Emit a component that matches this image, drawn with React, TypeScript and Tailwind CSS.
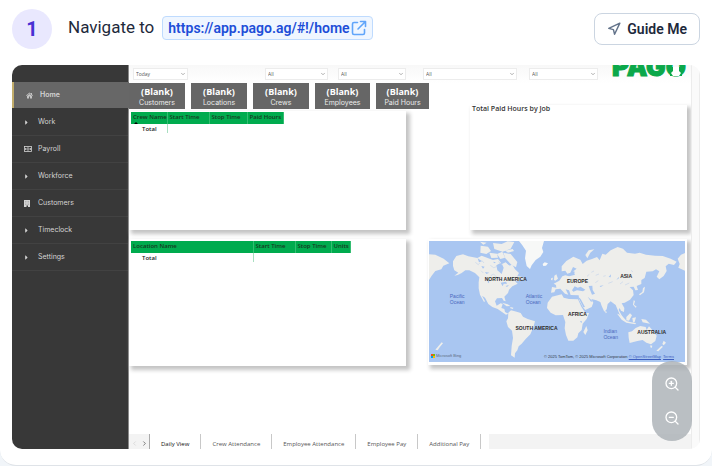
import { useState } from 'react';
import clsx from 'clsx';
import { ChevronDown, ChevronLeft, ChevronRight, Navigation, ZoomIn, ZoomOut } from 'lucide-react';
import { FaCaretRight } from 'react-icons/fa';

const navItems = [
  { label: 'Work', icon: 'caret' },
  { label: 'Payroll', icon: 'money' },
  { label: 'Workforce', icon: 'caret' },
  { label: 'Customers', icon: 'building' },
  { label: 'Timeclock', icon: 'caret' },
  { label: 'Settings', icon: 'caret' },
];

const filters = [
  { name: 'Period', value: 'Today', className: 'ml-1 w-[55px]' },
  { name: 'Location', value: 'All', className: 'ml-[77px] w-[63px]' },
  { name: 'Crew', value: 'All', className: 'ml-[10px] w-[68px]' },
  { name: 'Employee', value: 'All', className: 'ml-[17px] w-[94px]' },
  { name: 'Job', value: 'All', className: 'ml-3 w-[69px]' },
];

const cards = ['Customers', 'Locations', 'Crews', 'Employees', 'Paid Hours'];

const tabs = ['Daily View', 'Crew Attendance', 'Employee Attendance', 'Employee Pay', 'Additional Pay'];

const continents = [
  { name: 'NORTH AMERICA', className: 'left-[30%] top-[31%]' },
  { name: 'SOUTH AMERICA', className: 'left-[42%] top-[72%]' },
  { name: 'EUROPE', className: 'left-[58%] top-[33%]' },
  { name: 'ASIA', className: 'left-[77%] top-[29%]' },
  { name: 'AFRICA', className: 'left-[58%] top-[60%]' },
  { name: 'AUSTRALIA', className: 'left-[87%] top-[75%]' },
];

const oceans = [
  { name: 'Pacific', className: 'left-[11%] top-[48%]' },
  { name: 'Atlantic', className: 'left-[41%] top-[48%]' },
  { name: 'Indian', className: 'left-[71%] top-[77%]' },
];

function NavIcon({ icon }: { icon: string }) {
  if (icon === 'money') {
    return (
      <svg viewBox="0 0 16 12" className="h-[6px] w-2" fill="none" stroke="currentColor" strokeWidth="1.6">
        <rect x="1" y="1" width="14" height="10" />
        <circle cx="8" cy="6" r="2.4" />
        <path d="M3 4v4M13 4v4" />
      </svg>
    );
  }
  if (icon === 'building') {
    return (
      <svg viewBox="0 0 12 14" className="h-[7px] w-[6px]" fill="currentColor">
        <path d="M0 0h12v14H8v-3H5v3H0z" />
        <path d="M2 3h8M2 6h8M2 9h8" stroke="#8b8b8b" strokeWidth="1" strokeDasharray="2 1" />
      </svg>
    );
  }
  return <FaCaretRight className="-ml-px size-[7px]" />;
}

function Sidebar() {
  return (
    <nav className="w-[117px] shrink-0 border-r border-[#8a8a8a] bg-[#383838] pt-[17px] font-['Inter',sans-serif] text-[7px] leading-[10px] text-[#d4d4d4]">
      <a
        href="#home"
        className="-mr-px mb-px flex h-[26px] items-center border-l-2 border-[#c2ad6b] bg-[#676767] pl-3 font-semibold"
      >
        <svg viewBox="0 0 14 14" className="mr-[7px] size-[7px]" fill="#c4c4c4">
          <path d="M7 1L0 7l1 1 6-5 6 5 1-1-2-2V2h-2v1.500z" />
          <path d="M7 4L2 8v5h4V9h2v4h4V8z" />
        </svg>
        Home
      </a>
      {navItems.map((item) => (
        <a key={item.label} href={'#' + item.label} className="flex h-[27px] items-center border-b border-[#424242] pl-3">
          <span className="flex w-[14px] items-center">
            <NavIcon icon={item.icon} />
          </span>
          {item.label}
        </a>
      ))}
    </nav>
  );
}

function Filters() {
  return (
    <div className="flex h-[18px] items-start bg-gradient-to-b from-[#f8f8f8] to-white pt-[3px]">
      {filters.map((f) => (
        <div key={f.name} className={clsx('relative shrink-0', f.className)}>
          <select
            aria-label={f.name}
            className="block h-3 w-full appearance-none border border-[#ececec] bg-white px-[2px] text-[5px] leading-[10px] text-[#555]"
          >
            <option>{f.value}</option>
          </select>
          <ChevronDown className="pointer-events-none absolute right-[2px] top-[3px] size-[6px] text-[#666]" />
        </div>
      ))}
      {/* logo runs up under the top edge of the report */}
      <div className="relative -mt-[14px] ml-[14px]">
        <span className="block font-['Inter',sans-serif] text-[26px] font-black leading-[26px] text-[#0ba84a] [-webkit-text-stroke:1px_#0ba84a]">
          PAGO
        </span>
        <svg viewBox="0 0 12 9" className="absolute bottom-[4px] right-[4px] h-[9px] w-3">
          <path fill="#0ba84a" d="M0 0h12v9H0z" />
          <path fill="#fff" d="M3 0h6v4l2 2-2 3H3L1 6l2-2z" />
        </svg>
      </div>
    </div>
  );
}

function ReportTable({ columns, className }: { columns: { name: string; width: string }[]; className?: string }) {
  return (
    <table className={clsx('table-fixed border-collapse text-left text-[6px] leading-[8px]', className)}>
      <thead>
        <tr className="h-3 bg-[#00ab4e] text-[#17381f]">
          {columns.map((c) => (
            <th
              key={c.name}
              className={clsx('relative whitespace-nowrap border-r border-[#35bd72] p-0 pb-[2px] pl-[2px] font-semibold', c.width)}
            >
              {c.name}
              {c.name === 'Crew Name' && (
                <svg viewBox="0 0 4 2" className="absolute bottom-0 left-[3px] h-[2px] w-1">
                  <path d="M0 2l2-2 2 2z" />
                </svg>
              )}
            </th>
          ))}
        </tr>
      </thead>
      <tbody>
        <tr className="h-[9px] text-[#222]">
          <td className="border-r border-[#a9dfc1] p-0 pl-[11px] font-semibold">Total</td>
          <td colSpan={columns.length - 1} className="p-0"></td>
        </tr>
      </tbody>
    </table>
  );
}

function WorldMap() {
  return (
    <div className="relative h-[121px] overflow-hidden bg-[#a9c6f1] font-['Liberation_Sans',sans-serif] text-[5px] leading-[6px]">
      <svg viewBox="0 3 768 363" preserveAspectRatio="none" className="block h-full w-full" fill="#eeeeeb">
        {/* North America */}
        <path d="M72 64L82 48L102 43L118 49L145 54L158 47L176 54L192 60L207 57L216 68L202 76L205 91L218 102L224 83L219 72L230 67L240 77L250 74L258 88L270 99L264 110L279 113L270 123L258 124L266 131L250 139L240 149L237 159L226 170L230 184L224 182L219 174L204 175L198 184L203 197L215 190L221 192L217 204L226 207L228 216L238 221L231 224L219 216L206 207L190 201L178 192L168 173L159 167L168 184L165 186L153 164L149 145L149 127L151 112L138 99L121 91L109 91L98 99L86 105L76 107L88 98L76 91L72 78Z" />
        {/* Arctic islands */}
        <path d="M155 17l22 3 9 13-14 9-18-4zM181 38l23 3 3 12-20 1zM204 42l16-7 8 18-14 4zM223 38l22 4 20 24-4 16-14-8-18-19zM192 9l26 3 18-8 20 2-11 20-24 9-25-8zM153 5l20 3-10 6zM229 32l22-5 4 6-18 5zM231 70l12 8-10 6zM264 108l18 3 1 8-14-2zM219 188l17 5 8 5-11 1zM244 201l9 2-1 4-8-2z" />
        {/* Greenland and Iceland */}
        <path fill="#f7f8f7" d="M270 3H345L339 24L343 36L334 50L320 60L308 76L303 87L293 78L288 55L291 32L280 16ZM341 72l6-5 10 3-6 7-8 1z" />
        {/* South America */}
        <path d="M238 218L246 211L263 215L275 219L282 230L296 237L318 244L313 262L304 283L290 297L278 311L269 319L265 331L258 340L257 353L246 346L248 318L252 294L249 272L237 261L232 244L237 235Z" />
        {/* Africa */}
        <path d="M369 170L398 163L404 173L420 177L447 178L457 200L469 219L480 219L473 237L461 251L458 270L448 280L445 292L433 302L418 302L411 285L407 265L409 246L402 225L380 226L365 218L354 204L356 188ZM472 258l4 13-7 14-6-9z" />
        {/* Europe and Asia */}
        <path d="M366 158L369 141L382 143L381 135L374 131L391 122L400 109L409 106L420 109L438 104L433 94L443 86L432 81L424 98L415 101L409 92L398 94L398 79L412 63L433 50L454 59L461 72L473 62L489 57L504 51L512 61L520 41L530 44L545 31L566 21L582 26L594 38L618 41L632 38L651 44L678 47L701 48L725 56L743 65L735 75L719 71L710 79L713 93L704 108L691 118L683 110L691 94L681 88L671 94L652 95L647 114L637 120L637 132L623 138L627 150L619 151L614 140L602 141L612 151L614 165L603 179L587 188L578 190L586 204L585 216L576 212L572 204L569 210L581 231L573 226L565 207L560 195L545 184L536 192L533 208L526 215L518 198L514 186L502 181L487 177L493 188L488 201L469 210L462 202L450 180L449 166L425 165L420 151L410 148L418 164L408 161L394 146L380 148L376 157Z" />
        <path d="M0 43L19 44L44 56L61 70L43 77L37 88L19 93L8 107L0 120ZM768 39L756 44L746 56L752 72L748 83L768 92ZM376 107l6-4 5 13-8 6-4-2zM367 114l5-1-2 8-4-1zM469 45l10-14 17-3-12 10-9 17z" />
        {/* Islands, Australia and New Zealand */}
        <path d="M642 144l6-4-3 17-12 9-3-3 10-7zM614 181l4 2-3 11 8 6-3 3-8-9zM566 221l14 8 13 14 13 4 15 2-2 4-27-5-14-9-13-17zM592 231l11-11 6 6-9 16-8-1zM610 234l11-2-4 14-5 1zM637 237l14 2 12 12-22-4zM598 277L609 274L620 264L634 258L650 261L653 270L660 259L673 274L683 287L679 303L666 313L652 308L641 300L625 303L602 309L599 293ZM664 316l6 1-2 7-4-2zM704 302l7 6-7 8-4-4zM697 318l5 2-14 14-6-2zM38 307l4 3-10 12-6 9-7-2zM528 211l6 6-4 3z" />
        {/* inland water */}
        <g fill="#a9c6f1">
          <path d="M429 151l8-12 9 4 9-3 14 9-7 5-18-3-11 4zM479 138l11-1 1 13 7 11-9 3-6-15zM446 169l9 8 13 24-5 1zM476 170l15 14-5 1zM146 55l13 9-9 3zM157 78l10 2-5 6zM168 96l13 2-9 4zM177 121l4 1-1 8-4-3zM215 128l16-3 3 6-10 0-3 8zM230 138l10-3-6 6zM193 65l8 2-6 3zM539 111l7-8-1 9zM512 138l12-2-9 5zM562 120l7-9 1 4zM453 243l6 1-2 6zM423 101l12-7 3 3-12 7z" />
        </g>
        <g fill="none" stroke="#c6d5ec" strokeWidth="2">
          <path d="M139 67l9 7 4-5M158 61l7 8M184 76l10 7 11-4M185 107l9-5 9 10M208 65l12 10M163 99l-7-7M203 118l11-3M500 106l10-4M523 109l7-2M499 128l9-6M538 130l13-5M573 132l9-7M588 135l13-6M474 109l7-6M487 97l8-4M464 124l9-4M606 91l6 5" />
        </g>
      </svg>
      {continents.map((c) => (
        <span
          key={c.name}
          className={clsx('absolute -translate-x-1/2 -translate-y-1/2 whitespace-nowrap font-bold text-[#2b2b2b]', c.className)}
        >
          {c.name}
        </span>
      ))}
      {oceans.map((o) => (
        <span key={o.name} className={clsx('absolute -translate-x-1/2 -translate-y-1/2 text-[#4a68bd]', o.className)}>
          {o.name}
          <br />
          Ocean
        </span>
      ))}
      <span className="absolute bottom-[3px] left-[2px] flex items-center gap-px text-[4px] text-[#5d6b80]">
        <svg viewBox="0 0 8 8" className="size-1">
          <path fill="#f25022" d="M0 0h4v4H0z" />
          <path fill="#7fba00" d="M4 0h4v4H4z" />
          <path fill="#00a4ef" d="M0 4h4v4H0z" />
          <path fill="#ffb900" d="M4 4h4v4H4z" />
        </svg>
        Microsoft Bing
      </span>
      <span className="absolute bottom-[2px] right-[11px] whitespace-nowrap text-[4px] text-[#2f3542]">
        © 2025 TomTom, © 2025 Microsoft Corporation{' '}
        <a href="#osm" className="text-[#3d5fc0] underline">
          © OpenStreetMap
        </a>{' '}
        <a href="#terms" className="ml-px text-[#3d5fc0] underline">
          Terms
        </a>
      </span>
    </div>
  );
}

function Report() {
  const [activeTab, setActiveTab] = useState('Daily View');

  return (
    <main className="flex min-w-0 flex-1 flex-col bg-white font-['Open_Sans',sans-serif]">
      <Filters />
      <div className="grid flex-1 grid-cols-[300fr_262fr] content-start">
        <div>
          <div className="grid grid-cols-[56fr_56fr_56fr_55fr_53fr] gap-[6px]">
            {cards.map((c) => (
              <div key={c} className="h-[26px] bg-[#666] pt-[3px] text-center text-white">
                <p className="text-[9px] font-bold leading-[12px]">(Blank)</p>
                <p className="whitespace-nowrap font-['Inter',sans-serif] text-[7px] leading-[10px] text-[#ececec]">{c}</p>
              </div>
            ))}
          </div>
          <section className="mr-[23px] mt-[2px] h-[119px] bg-white pl-[2px] pt-px shadow-[3px_3px_4px_1px_#c4c4c4]">
            <ReportTable
              className="w-[152px]"
              columns={[
                { name: 'Crew Name', width: 'w-[36px]' },
                { name: 'Start Time', width: 'w-[42px]' },
                { name: 'Stop Time', width: 'w-[38px]' },
                { name: 'Paid Hours', width: 'w-[36px]' },
              ]}
            />
          </section>
          <section className="mr-[23px] mt-[9px] h-[127px] bg-white pl-[2px] pt-[2px] shadow-[3px_3px_4px_1px_#c4c4c4]">
            <ReportTable
              className="w-[219px]"
              columns={[
                { name: 'Location Name', width: 'w-[122px]' },
                { name: 'Start Time', width: 'w-[42px]' },
                { name: 'Stop Time', width: 'w-[36px]' },
                { name: 'Units', width: 'w-[19px]' },
              ]}
            />
          </section>
        </div>
        <div className="pr-1 pt-[22px]">
          <section className="ml-[41px] h-[125px] bg-white pl-[2px] shadow-[3px_3px_4px_1px_#c4c4c4]">
            <h2 className="text-[7px] font-semibold leading-[8px] text-[#333]">Total Paid Hours by Job</h2>
          </section>
          <section className="-ml-px mt-[9px] bg-white pb-[3px] pl-px pr-[2px] pt-[2px] shadow-[3px_3px_4px_1px_#c4c4c4]">
            <WorldMap />
          </section>
        </div>
      </div>
      <div className="flex h-[15px] text-[6px] leading-[8px] text-[#555]">
        <div className="flex w-[21px] items-center justify-around border-r border-[#aaa] bg-[#f3f3f3] pt-1">
          <button type="button" aria-label="Previous page">
            <ChevronLeft className="size-[7px] text-[#ccc]" />
          </button>
          <button type="button" aria-label="Next page">
            <ChevronRight className="size-[7px] text-[#333]" />
          </button>
        </div>
        <div className="flex">
          {tabs.map((t) => (
            <button
              key={t}
              type="button"
              onClick={() => setActiveTab(t)}
              className={clsx(
                'whitespace-nowrap border-r border-[#c8c8c8] px-[11px] pt-1',
                activeTab === t && 'font-medium text-[#111]'
              )}
            >
              {t}
            </button>
          ))}
        </div>
        <div className="ml-2 flex-1 bg-[#f3f3f3]" />
      </div>
    </main>
  );
}

export default function App() {
  return (
    <div className="min-h-screen bg-[#f1f5f9]">
      <div className="rounded-b-2xl border-b border-[#dfe3e8] bg-white px-3 pb-4">
        <header className="flex h-[65px] items-start pt-[9px] font-['Roboto',sans-serif] text-[#1e293b]">
          <span className="flex size-10 items-center justify-center rounded-full bg-[#e9e8fe] text-xl font-bold text-[#4830d4]">
            1
          </span>
          <p className="ml-4 flex h-[38px] items-center gap-2 text-[17px]">
            Navigate to
            <a
              href="#home"
              className="flex h-6 items-center rounded border border-[#bfdbfe] bg-[#eff6ff] px-[5px] text-sm font-semibold text-[#1d4ed8]"
            >
              https://app.pago.ag/#!/home
              <svg
                viewBox="0 0 16 16"
                className="ml-px size-4 text-[#60a5fa]"
                fill="none"
                stroke="currentColor"
                strokeWidth="1.6"
                strokeLinecap="round"
                strokeLinejoin="round"
              >
                <path d="M6.5 2.500H3A1.500 1.500 0 0 0 1.500 4v9A1.500 1.500 0 0 0 3 14.500h9a1.500 1.500 0 0 0 1.500-1.500V9.500M9.500 1.500h5v5M14.500 1.500L7 9" />
              </svg>
            </a>
          </p>
          <button
            type="button"
            className="ml-auto mt-1 flex h-8 items-center gap-[6px] rounded-lg border border-[#cbd5e1] px-3 text-sm font-semibold"
          >
            <Navigation strokeWidth={2.5} className="size-[14px] text-[#64748b]" />
            Guide Me
          </button>
        </header>

        <div className="relative flex h-96 overflow-hidden rounded-[10px] bg-white">
          <Sidebar />
          <Report />
          <div className="w-[9px] shrink-0 border-x border-[#ececec] bg-[#fafafa]" />
          <div className="absolute bottom-2 right-2 flex h-20 w-10 flex-col items-center justify-around rounded-full bg-[#a9afb4]/80 py-[6px] text-white">
            <button type="button" aria-label="Zoom in">
              <ZoomIn className="size-4" />
            </button>
            <button type="button" aria-label="Zoom out">
              <ZoomOut className="size-4" />
            </button>
          </div>
        </div>
      </div>
    </div>
  );
}
